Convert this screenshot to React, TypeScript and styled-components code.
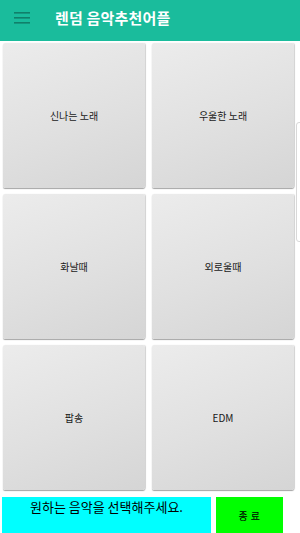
import React from "react"
import styled, { createGlobalStyle } from "styled-components"

const GlobalStyle = createGlobalStyle`
  html, body {
    margin: 0;
    padding: 0;
    background: #ffffff;
    font-family: "Noto Sans CJK KR", "Noto Sans", Roboto, sans-serif;
  }
`;

const Screen = styled.div`
  position: relative;
  width: 300px;
  height: 533px;
  overflow: hidden;
  display: flex;
  flex-direction: column;
  background: #ffffff;
`;

const AppBar = styled.header`
  height: 41px;
  flex-shrink: 0;
  background: #1abc9c;
  display: flex;
  align-items: center;
  padding-left: 14px;
  gap: 25px;
  box-sizing: border-box;
`;

const MenuIcon = styled.svg`
  width: 16px;
  height: 12px;
  display: block;
  margin-top: -6px;
`;

const Title = styled.h1`
  margin: 0 0 6px 0;
  color: #ffffff;
  font-size: 15px;
  font-weight: 700;
  letter-spacing: 0.2px;
`;

const Grid = styled.div`
  display: grid;
  grid-template-columns: 142px 142px;
  grid-auto-rows: 145px;
  column-gap: 7px;
  row-gap: 6px;
  padding: 2px 0 0 3px;
`;

const GenreButton = styled.button`
  border: none;
  border-radius: 2px;
  background: linear-gradient(160deg, #ececec 0%, #e0e0e0 55%, #d5d5d5 100%);
  box-shadow: 0 1px 1px rgba(0, 0, 0, 0.35), 1px 0 1px rgba(0, 0, 0, 0.15);
  font-family: "Noto Sans CJK KR", Roboto, sans-serif;
  font-size: 10px;
  color: #1a1a1a;
  padding: 0;
  cursor: pointer;
`;

const BottomBar = styled.div`
  margin-top: 7px;
  display: flex;
  gap: 5px;
  padding-left: 2px;
  height: 36px;
`;

const Prompt = styled.div`
  width: 209px;
  background: #00ffff;
  color: #000000;
  font-size: 13px;
  text-align: center;
  line-height: 20px;
`;

const ExitButton = styled.button`
  width: 67px;
  border: none;
  background: #00ff00;
  color: #000000;
  font-family: "Noto Sans CJK KR", sans-serif;
  font-size: 10px;
  letter-spacing: 0.5px;
  padding: 1px 0 0 0;
`;

const ScrollHint = styled.div`
  position: absolute;
  right: -3px;
  top: 122px;
  width: 5px;
  height: 118px;
  border: 1px solid #d8d8d8;
  border-radius: 3px;
`;

const genres = ["신나는 노래", "우울한 노래", "화날때", "외로울때", "팝송", "EDM"]

export default function App() {
  return (
    <Screen>
      <GlobalStyle />
      <AppBar>
        <MenuIcon viewBox="0 0 16 12">
          <rect x="0" y="0" width="16" height="1.6" fill="#10806a" />
          <rect x="0" y="5" width="16" height="1.6" fill="#10806a" />
          <rect x="0" y="10" width="16" height="1.6" fill="#10806a" />
        </MenuIcon>
        <Title>렌덤 음악추천어플</Title>
      </AppBar>
      <Grid>
        {genres.map((g) => (
          <GenreButton key={g}>{g}</GenreButton>
        ))}
      </Grid>
      <BottomBar>
        <Prompt>원하는 음악을 선택해주세요.</Prompt>
        <ExitButton>종 료</ExitButton>
      </BottomBar>
      <ScrollHint />
    </Screen>
  )
}
